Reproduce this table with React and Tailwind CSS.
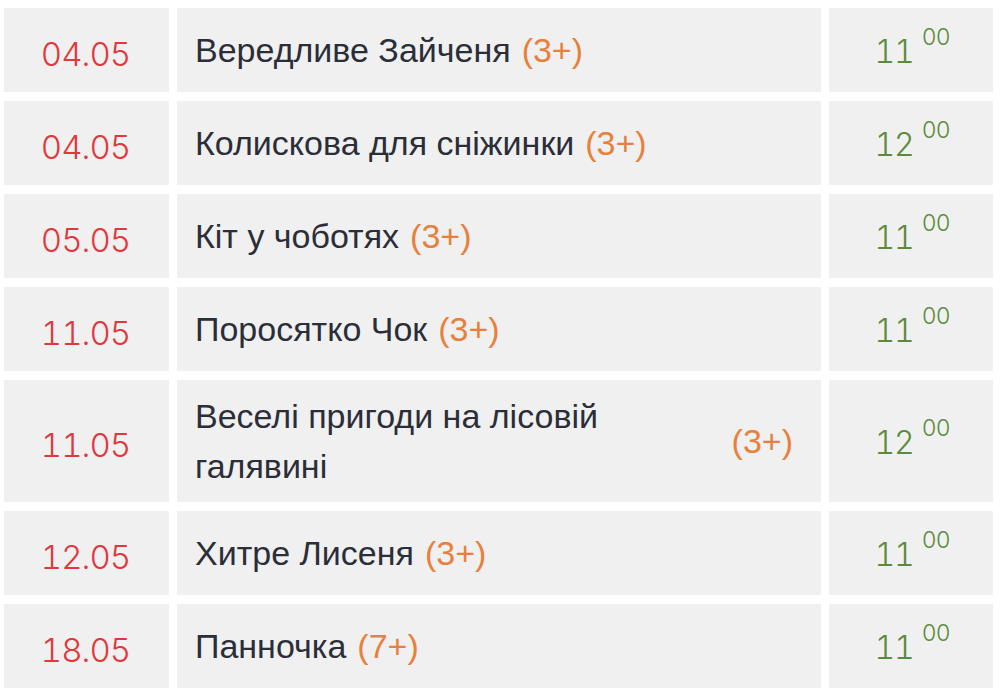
import React from "react";

const rows = [
  { d: "04.05", t: "Вередливе Зайченя", r: "(3+)", h: "11" },
  { d: "04.05", t: "Колискова для сніжинки", r: "(3+)", h: "12" },
  { d: "05.05", t: "Кіт у чоботях", r: "(3+)", h: "11" },
  { d: "11.05", t: "Поросятко Чок", r: "(3+)", h: "11" },
  { d: "11.05", t: "Веселі пригоди на лісовій галявині", r: "(3+)", h: "12" },
  { d: "12.05", t: "Хитре Лисеня", r: "(3+)", h: "11" },
  { d: "18.05", t: "Панночка", r: "(7+)", h: "11" },
];

export default function App() {
  return (
    <div className="bg-white w-[1000px] h-[689px] overflow-hidden pt-[8px] pl-[4px] pr-[7px]">
      <div className="flex flex-col gap-[9px]">
        {rows.map((row, i) => (
          <div key={i} className="flex gap-[8px]">
            <div className="w-[165px] shrink-0 bg-[#f0f0f0] min-h-[84px] flex items-center justify-center">
              <span className="mt-[9px] pr-[2px] text-[#e0383c] text-[33px] leading-[33px] font-['Inter',sans-serif] tabular-nums font-light tracking-[-1px]">
                {row.d}
              </span>
            </div>
            <div className="flex-1 bg-[#f0f0f0] min-h-[84px] flex items-center gap-[11px] pl-[18px] pr-[28px] py-[11px] font-['Liberation_Sans',Arial,sans-serif] text-[34px] leading-[50px]">
              <span className="text-[#2b2e38]">{row.t}</span>
              <span className="text-[#e8803c] shrink-0">{row.r}</span>
            </div>
            <div className="w-[164px] shrink-0 bg-[#f0f0f0] min-h-[84px] flex items-center justify-center">
              <div className="flex items-start mt-[3px] ml-[2px] font-['Inter',sans-serif] tabular-nums font-light text-[#5a8a3a]">
                <span className="text-[32px] leading-[32px] tracking-[-1px]">{row.h}</span>
                <span className="text-[23px] leading-[23px] tracking-[-1px] -mt-[10px] ml-[8px]">00</span>
              </div>
            </div>
          </div>
        ))}
      </div>
    </div>
  );
}
